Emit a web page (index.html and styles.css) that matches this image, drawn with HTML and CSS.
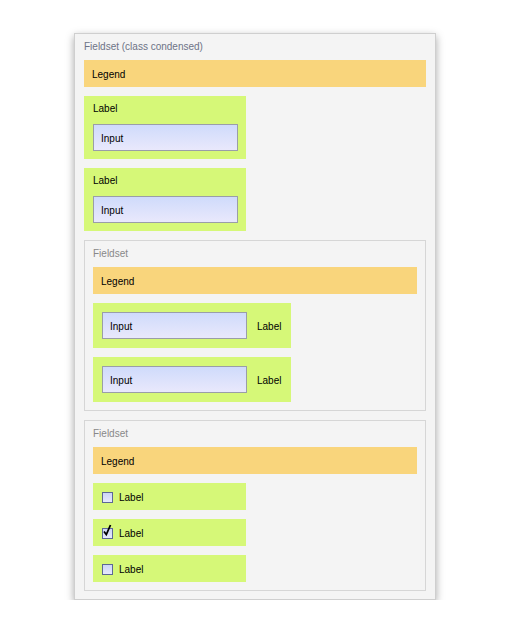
FILE: index.html
```html
<!DOCTYPE html>
<html>
<head>
<meta charset="utf-8">
<link rel="stylesheet" href="styles.css">
</head>
<body>
<div class="panel">
  <div class="title">Fieldset (class condensed)</div>
  <div class="legend">Legend</div>
  <div class="field stacked">
    <div class="label">Label</div>
    <div class="input">Input</div>
  </div>
  <div class="field stacked">
    <div class="label">Label</div>
    <div class="input">Input</div>
  </div>
  <div class="fieldset">
    <div class="ftitle">Fieldset</div>
    <div class="legend">Legend</div>
    <div class="field inline">
      <div class="input">Input</div>
      <div class="label">Label</div>
    </div>
    <div class="field inline">
      <div class="input">Input</div>
      <div class="label">Label</div>
    </div>
  </div>
  <div class="fieldset">
    <div class="ftitle">Fieldset</div>
    <div class="legend">Legend</div>
    <div class="field check">
      <span class="box"></span>
      <div class="label">Label</div>
    </div>
    <div class="field check">
      <span class="box checked"><svg width="12" height="14" viewBox="0 0 12 14"><path d="M2 7.5 L4.3 10.5 L8.5 1" fill="none" stroke="#000" stroke-width="1.8"/></svg></span>
      <div class="label">Label</div>
    </div>
    <div class="field check">
      <span class="box"></span>
      <div class="label">Label</div>
    </div>
  </div>
</div>
</body>
</html>
```

FILE: styles.css
```css
html, body {
  margin: 0;
  padding: 0;
  background: #ffffff;
}
body {
  font-family: "Liberation Sans", Arial, sans-serif;
  font-size: 10px;
  color: #000;
  padding: 33px 0 0 74px;
}
.panel {
  width: 342px;
  box-sizing: content-box;
  background: #f4f4f4;
  border: 1px solid #cfcfcf;
  padding: 5px 9px 8px 9px;
  display: flex;
  flex-direction: column;
  gap: 9px;
  box-shadow: 0 3px 8px rgba(0, 0, 0, 0.35);
}
.title {
  height: 13px;
  line-height: 13px;
  padding-top: 1px;
  box-sizing: border-box;
  color: #6d7386;
  margin-bottom: -1px;
}
.legend {
  height: 27px;
  line-height: 27px;
  padding-top: 1px;
  box-sizing: border-box;
  background: #f9d57c;
  padding-left: 8px;
}
.field {
  background: #d6f878;
  box-sizing: border-box;
}
.label {
  padding-top: 1px;
}
.stacked {
  width: 162px;
  height: 63px;
  padding: 5px 9px 0 9px;
}
.stacked .label {
  line-height: 14px;
  height: 14px;
  box-sizing: border-box;
  margin-bottom: 9px;
}
.input {
  width: 145px;
  height: 27px;
  box-sizing: border-box;
  border: 1px solid #9a9ea8;
  background: linear-gradient(#cfdbfb, #e9e8fc);
  padding-left: 7px;
  padding-top: 1px;
  line-height: 25px;
}
.fieldset {
  border: 1px solid #d6d6d6;
  padding: 5px 8px 8px 8px;
  display: flex;
  flex-direction: column;
  gap: 9px;
}
.ftitle {
  height: 13px;
  line-height: 13px;
  padding-top: 1px;
  box-sizing: border-box;
  color: #888888;
  margin-bottom: -1px;
}
.inline {
  width: 198px;
  height: 45px;
  padding: 9px;
  display: flex;
  align-items: center;
  gap: 10px;
}
.check {
  width: 153px;
  height: 27px;
  padding-left: 9px;
  display: flex;
  align-items: center;
  gap: 6px;
}
.box {
  position: relative;
  width: 11px;
  height: 11px;
  box-sizing: border-box;
  border: 1px solid #5c6896;
  background: linear-gradient(#cdd6f8, #e6e8fc);
  margin-top: 1px;
}
.box svg {
  position: absolute;
  left: -1px;
  top: -5px;
}
```
